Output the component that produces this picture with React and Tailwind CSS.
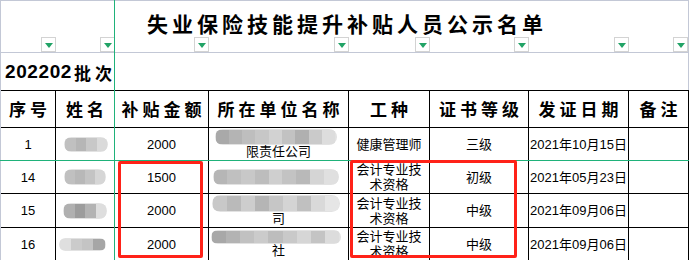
import React from 'react';
import clsx from 'clsx';

const COLS = 'grid grid-cols-[55px_59px_94px_140px_81px_99px_100px_60px]';
const SANS = "font-['Liberation_Sans','Noto_Sans_CJK_SC',sans-serif]";
const CJK_BOLD = "font-['Noto_Sans_CJK_SC',sans-serif] font-bold";

const headers = ['序号', '姓名', '补贴金额', '所在单位名称', '工种', '证书等级', '发证日期', '备注'];

const rows = [
    {
        no: '1', h: 'h-[33px]', amount: '2000',
        name: { shades: ['#c0c0c0', '#b6b6b6', '#c8c8c8', '#dadada'], w: 'w-[44px]', h: 'h-[15px]', off: 'ml-[2px]' },
        company: { shades: ['#a9a9a9', '#b4b4b4', '#bebebe', '#c7c7c7', '#d2d2d2', '#c2c2c2', '#b0b0b0', '#cacaca', '#dddddd'], w: 'w-[122px]', h: 'h-[16px]', tail: '限责任公司' },
        job: ['健康管理师'], level: '三级', date: '2021年10月15日',
    },
    {
        no: '14', h: 'h-[33px]', amount: '1500',
        name: { shades: ['#c0c0c0', '#b8b8b8', '#c4c4c4', '#d6d6d6'], w: 'w-[42px]', h: 'h-[16px]', off: '' },
        company: { shades: ['#b6b6b6', '#c0c0c0', '#c8c8c8', '#bdbdbd', '#cfcfcf', '#c3c3c3', '#b9b9b9', '#d5d5d5', '#e0e0e0'], w: 'w-[126px]', h: 'h-[16px]' },
        job: ['会计专业技', '术资格'], level: '初级', date: '2021年05月23日',
    },
    {
        no: '15', h: 'h-[34px]', amount: '2000',
        name: { shades: ['#b0b0b0', '#9c9c9c', '#b3b3b3', '#dedede'], w: 'w-[44px]', h: 'h-[16px]', off: '' },
        company: { shades: ['#c8c8c8', '#bababa', '#cdcdcd', '#b5b5b5', '#c6c6c6', '#d4d4d4', '#c0c0c0', '#d9d9d9', '#e6e6e6'], w: 'w-[128px]', h: 'h-[17px]', tail: '司' },
        job: ['会计专业技', '术资格'], level: '中级', date: '2021年09月06日',
    },
    {
        no: '16', h: 'h-[33px]', amount: '2000',
        name: { shades: ['#dfdfdf', '#cbcbcb', '#c4c4c4', '#a6a6a6'], w: 'w-[47px]', h: 'h-[13px]', off: 'mr-[6px]' },
        company: { shades: ['#a8a8a8', '#b3b3b3', '#c1c1c1', '#cbcbcb', '#bdbdbd', '#c9c9c9', '#d6d6d6', '#c4c4c4', '#dcdcdc'], w: 'w-[130px]', h: 'h-[14px]', tail: '社' },
        job: ['会计专业技', '术资格'], level: '中级', date: '2021年09月06日',
    },
];

// mosaic blob standing in for blurred names / company names
function Blob({ shades, className }) {
    return (
        <div className={clsx('flex shrink-0 overflow-hidden rounded-full bg-[#e2e2e2] p-[1px] blur-[0.6px]', className)}>
            {shades.map((c, i) => (
                <div key={i} className="h-full flex-1" style={{ background: c }} />
            ))}
        </div>
    );
}

function FilterButton() {
    return (
        <div className="absolute bottom-0 right-0 flex h-[15px] w-[15px] items-center justify-center border border-[#d3d3d3] bg-white">
            <svg width="8" height="5" viewBox="0 0 8 5" className="mt-[2px]">
                <polygon points="0,0 8,0 4,5" fill="#21a366" />
            </svg>
        </div>
    );
}

const cell = 'flex items-center justify-center border-r border-b border-black';

export default function App() {
    return (
        <div className={clsx('relative h-[260px] w-[690px] overflow-hidden bg-white text-black', SANS)}>
            <div className="w-[689px] border-l border-[#c3c8d6]">
                {/* title row */}
                <div className={clsx(COLS, 'relative h-[53px] border-t border-b border-[#c3c8d6]')}>
                    {headers.map((h, i) => (
                        <div key={h} className={clsx('relative', i === 7 && 'border-r border-[#c3c8d6]')}>
                            <FilterButton />
                        </div>
                    ))}
                    <div className={clsx('pointer-events-none absolute inset-x-0 top-[8px] text-center text-[21px] leading-[28px] tracking-[4px] pl-[4px]', CJK_BOLD)}>
                        失业保险技能提升补贴人员公示名单
                    </div>
                </div>

                {/* batch row */}
                <div className="flex h-[37px] items-center border-r border-[#c3c8d6] pl-[4px] pt-[2px]">
                    <span className="font-['Liberation_Sans',sans-serif] text-[19px] font-bold tracking-[0.6px]">202202</span>
                    <span className={clsx('ml-[2px] text-[17px] tracking-[4px]', CJK_BOLD)}>批次</span>
                </div>

                {/* table */}
                <div className="border-t border-black">
                    <div className={clsx(COLS, 'h-[37px]')}>
                        {headers.map((h) => (
                            <div key={h} className={clsx(cell, 'pl-[4px] text-[17px] tracking-[4px]', CJK_BOLD)}>
                                {h}
                            </div>
                        ))}
                    </div>

                    {rows.map((r) => (
                        <div key={r.no} className={clsx(COLS, r.h, 'text-[13px] leading-[15px]')}>
                            <div className={cell}>{r.no}</div>
                            <div className={cell}>
                                <Blob shades={r.name.shades} className={clsx(r.name.w, r.name.h, r.name.off)} />
                            </div>
                            <div className={cell}>{r.amount}</div>
                            <div className={clsx(cell, 'flex-col')}>
                                <Blob shades={r.company.shades} className={clsx(r.company.w, r.company.h, 'mr-[6px]')} />
                                {r.company.tail && <div className="-mt-[1px]">{r.company.tail}</div>}
                            </div>
                            <div className={clsx(cell, 'flex-col')}>
                                {r.job.map((j) => (
                                    <div key={j}>{j}</div>
                                ))}
                            </div>
                            <div className={cell}>{r.level}</div>
                            <div className={cell}>{r.date}</div>
                            <div className={cell}></div>
                        </div>
                    ))}
                </div>
            </div>

            {/* frozen pane lines */}
            <div className="absolute left-[114px] top-0 h-[260px] w-[1px] bg-[#1fb27a]" />
            <div className="absolute left-0 top-[160px] h-[1px] w-[689px] bg-[#1fb27a]" />

            {/* red highlight boxes */}
            <div className="absolute left-[118px] top-[161px] h-[97px] w-[85px] rounded-[2px] border-[3px] border-[#ff2218]" />
            <div className="absolute left-[350px] top-[160px] h-[98px] w-[167px] rounded-[2px] border-[3px] border-[#ff2218]" />
        </div>
    );
}
